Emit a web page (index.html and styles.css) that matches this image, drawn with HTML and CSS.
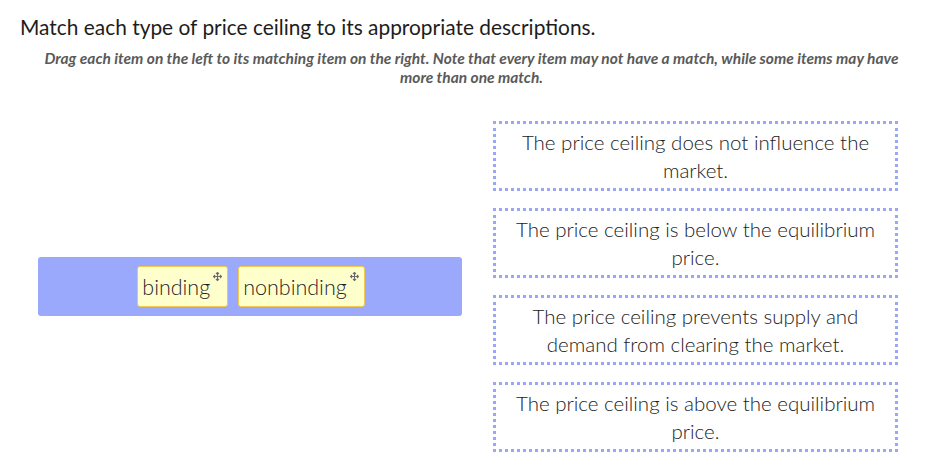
FILE: index.html
```html
<!DOCTYPE html>
<html lang="en">
<head>
<meta charset="utf-8">
<title>Match price ceilings</title>
<link rel="stylesheet" href="styles.css">
</head>
<body>
<div class="page">
  <h1 class="title">Match each type of price ceiling to its appropriate descriptions.</h1>
  <p class="instructions">Drag each item on the left to its matching item on the right. Note that every item may not have a match, while some items may have more than one match.</p>
  <div class="match">
    <div class="source">
      <div class="pool">
        <div class="chip">binding<svg class="move" viewBox="0 0 9 9" width="9" height="9"><path d="M4.5 0.5V8.5M0.5 4.5H8.5M3 2L4.5 0.5L6 2M3 7L4.5 8.5L6 7M2 3L0.5 4.5L2 6M7 3L8.5 4.5L7 6" fill="none" stroke="#6b6b6b" stroke-width="1.1"/></svg></div>
        <div class="chip">nonbinding<svg class="move" viewBox="0 0 9 9" width="9" height="9"><path d="M4.5 0.5V8.5M0.5 4.5H8.5M3 2L4.5 0.5L6 2M3 7L4.5 8.5L6 7M2 3L0.5 4.5L2 6M7 3L8.5 4.5L7 6" fill="none" stroke="#6b6b6b" stroke-width="1.1"/></svg></div>
      </div>
    </div>
    <div class="targets">
      <div class="target">The price ceiling does not influence the market.</div>
      <div class="target">The price ceiling is below the equilibrium price.</div>
      <div class="target">The price ceiling prevents supply and demand from clearing the market.</div>
      <div class="target">The price ceiling is above the equilibrium price.</div>
    </div>
  </div>
</div>
</body>
</html>
```
FILE: styles.css
```css
html, body {
  margin: 0;
  padding: 0;
  background: #ffffff;
}
body {
  font-family: "Lato", "Open Sans", sans-serif;
  color: #222;
}
.page {
  padding: 14px 0 0 0;
}
.title {
  margin: 0 0 0 20px;
  font-size: 20.9px;
  font-weight: 400;
  line-height: 26px;
  color: #1d1d1d;
}
.instructions {
  margin: 9px 35px 0 35px;
  text-align: center;
  font-size: 15.5px;
  line-height: 19px;
  font-weight: 700;
  font-style: italic;
  color: #5a5a5a;
}
.match {
  display: flex;
  align-items: center;
  margin: 34px 45px 0 38px;
  gap: 31px;
}
.source {
  flex: 0 0 424px;
}
.pool {
  background: #9aa9fc;
  border-radius: 3px;
  height: 59px;
  display: flex;
  align-items: center;
  justify-content: center;
  gap: 10px;
  padding-left: 2px;
}
.chip {
  display: flex;
  align-items: flex-start;
  background: #ffffcc;
  border: 1px solid #f2c94c;
  border-radius: 3px;
  height: 41px;
  box-sizing: border-box;
  padding: 0 5px 0 4px;
  font-size: 21.5px;
  font-weight: 300;
  line-height: 40px;
  color: #1f1f2f;
}
.move {
  margin: 5px 0 0 3px;
}
.targets {
  flex: 1;
  display: flex;
  flex-direction: column;
  gap: 17px;
}
.target {
  border: 3px dotted #9aa7f7;
  height: 70px;
  box-sizing: border-box;
  display: flex;
  align-items: center;
  justify-content: center;
  text-align: center;
  padding: 0 18px;
  font-size: 20.5px;
  font-weight: 300;
  line-height: 28px;
  color: #222;
}
```
